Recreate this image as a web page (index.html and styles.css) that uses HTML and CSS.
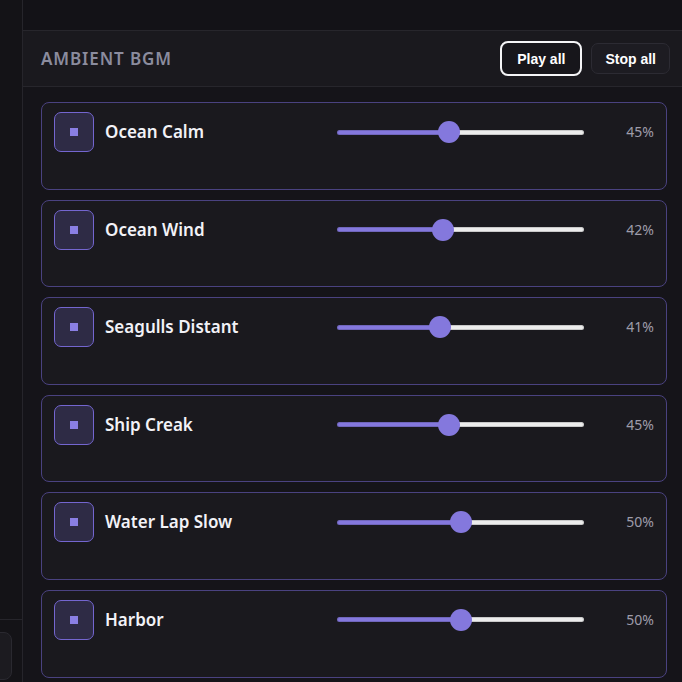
FILE: index.html
```html
<!DOCTYPE html>
<html lang="en">
<head>
    <meta charset="UTF-8">
    <meta name="viewport" content="width=device-width, initial-scale=1.0">
    <title>Ambient BGM</title>
    <link rel="stylesheet" href="styles.css">
</head>
<body>
    <div class="layout">
        <aside class="sidebar">
            <div class="sidebar-line"></div>
            <div class="sidebar-box"></div>
        </aside>

        <main class="main">
            <div class="topbar"></div>

            <div class="panel-header">
                <h2>Ambient BGM</h2>
                <div class="header-actions">
                    <button class="btn btn-play">Play all</button>
                    <button class="btn">Stop all</button>
                </div>
            </div>

            <div class="track-list">
                <div class="track">
                    <div class="track-icon"><span></span></div>
                    <div class="track-name">Ocean Calm</div>
                    <input class="volume" type="range" min="0" max="100" value="45" style="--v:45%">
                    <div class="track-pct">45%</div>
                </div>
                <div class="track">
                    <div class="track-icon"><span></span></div>
                    <div class="track-name">Ocean Wind</div>
                    <input class="volume" type="range" min="0" max="100" value="42" style="--v:42%">
                    <div class="track-pct">42%</div>
                </div>
                <div class="track">
                    <div class="track-icon"><span></span></div>
                    <div class="track-name">Seagulls Distant</div>
                    <input class="volume" type="range" min="0" max="100" value="41" style="--v:41%">
                    <div class="track-pct">41%</div>
                </div>
                <div class="track">
                    <div class="track-icon"><span></span></div>
                    <div class="track-name">Ship Creak</div>
                    <input class="volume" type="range" min="0" max="100" value="45" style="--v:45%">
                    <div class="track-pct">45%</div>
                </div>
                <div class="track">
                    <div class="track-icon"><span></span></div>
                    <div class="track-name">Water Lap Slow</div>
                    <input class="volume" type="range" min="0" max="100" value="50" style="--v:50%">
                    <div class="track-pct">50%</div>
                </div>
                <div class="track">
                    <div class="track-icon"><span></span></div>
                    <div class="track-name">Harbor</div>
                    <input class="volume" type="range" min="0" max="100" value="50" style="--v:50%">
                    <div class="track-pct">50%</div>
                </div>
            </div>
        </main>
    </div>
</body>
</html>
```

FILE: styles.css
```css
body {
    margin: 0;
    padding: 0;
    background-color: #131217;
    font-family: "Noto Sans", "Open Sans", sans-serif;
    color: #f2f2f7;
    height: 682px;
    overflow: hidden;
}

.layout {
    display: flex;
    height: 100%;
}

/* 左のサイドバー */
.sidebar {
    width: 22px;
    flex-shrink: 0;
    border-right: 1px solid #26252b;
    background-color: #141317;
    display: flex;
    flex-direction: column;
    justify-content: flex-end;
    overflow: hidden;
}

.sidebar-line {
    height: 1px;
    background: #26252b;
    margin-bottom: 12px;
}

.sidebar-box {
    width: 40px;
    height: 46px;
    margin-left: -30px;
    margin-bottom: 2px;
    border: 1px solid #2a2930;
    border-radius: 8px;
    background-color: #1c1b20;
}

.main {
    flex: 1;
    min-width: 0;
    display: flex;
    flex-direction: column;
}

.topbar {
    height: 30px;
    flex-shrink: 0;
    background-color: #131217;
}

.panel-header {
    display: flex;
    align-items: center;
    justify-content: space-between;
    height: 55px;
    padding: 0 12px 0 18px;
    background-color: #1a191e;
    border-top: 1px solid #27262c;
    border-bottom: 1px solid #27262c;
}

.panel-header h2 {
    margin: 0;
    font-size: 17px;
    font-weight: 600;
    letter-spacing: 0.9px;
    text-transform: uppercase;
    color: #8b8c9e;
}

.header-actions {
    display: flex;
    align-items: center;
    gap: 9px;
}

.btn {
    font-family: "Liberation Sans", Arial, sans-serif;
    font-size: 14px;
    font-weight: bold;
    color: #ffffff;
    background-color: #1d1c22;
    border: 1px solid #2c2b33;
    border-radius: 7px;
    height: 31px;
    padding: 0 13px;
    cursor: pointer;
}

.btn-play {
    height: 35px;
    padding: 0 15px;
    background-color: #17161b;
    border: 2px solid #f4f4f6;
    border-radius: 8px;
}

/* トラック一覧 */
.track-list {
    display: flex;
    flex-direction: column;
    gap: 10px;
    padding: 15px 15px 0 18px;
    background-color: #151419;
    flex: 1;
}

.track {
    display: grid;
    grid-template-columns: 40px 1fr 247px 59px;
    column-gap: 11px;
    align-items: start;
    height: 87.6px;
    box-sizing: border-box;
    padding: 9px 12px 0 12px;
    background-color: #1a191e;
    border: 1px solid #4a4280;
    border-radius: 8px;
    flex-shrink: 0;
}

.track-icon {
    width: 40px;
    height: 40px;
    box-sizing: border-box;
    border: 1px solid #7466d0;
    border-radius: 7px;
    background-color: #2e2b45;
    display: flex;
    align-items: center;
    justify-content: center;
}

.track-icon span {
    width: 8px;
    height: 8px;
    background-color: #8a7fe3;
}

.track-name {
    font-size: 17px;
    font-weight: 600;
    line-height: 40px;
    white-space: nowrap;
}

.track-pct {
    font-size: 14px;
    line-height: 40px;
    text-align: right;
    color: #9e9caa;
}

/* スライダー */
.volume {
    -webkit-appearance: none;
    appearance: none;
    width: 247px;
    height: 22px;
    margin: 9px 0 0 0;
    padding: 0;
    background: transparent;
    outline: none;
}

.volume::-webkit-slider-runnable-track {
    height: 5px;
    border-radius: 3px;
    background: linear-gradient(to right, #8478dd var(--v), #ececec var(--v));
    box-shadow: inset 0 0 0 1px rgba(0, 0, 0, 0.15);
}

.volume::-webkit-slider-thumb {
    -webkit-appearance: none;
    width: 22px;
    height: 22px;
    margin-top: -8.5px;
    border-radius: 50%;
    background-color: #8478dd;
    border: none;
}
```
